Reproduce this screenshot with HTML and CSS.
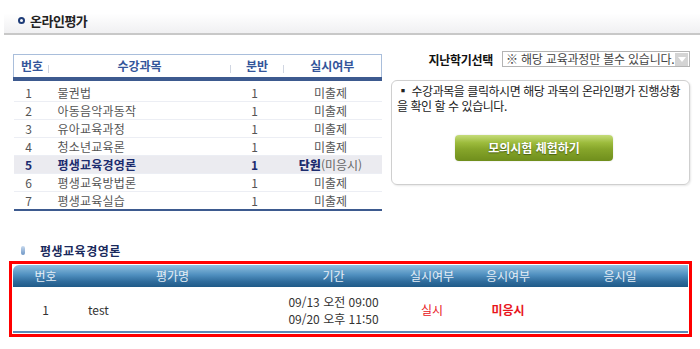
FILE: index.html
```html
<!DOCTYPE html>
<html lang="ko">
<head>
<meta charset="utf-8">
<link rel="stylesheet" href="styles.css">
</head>
<body>
<div class="page">
  <div class="titlebar">
    <span class="title-dot"></span>
    <h1 class="title">온라인평가</h1>
  </div>

  <div class="main">
    <div class="left">
      <table class="courses">
        <colgroup>
          <col class="c-no"><col class="c-name"><col class="c-sec"><col class="c-stat">
        </colgroup>
        <thead>
          <tr>
            <th><span class="sep">번호</span></th>
            <th><span class="sep">수강과목</span></th>
            <th><span class="sep">분반</span></th>
            <th>실시여부</th>
          </tr>
        </thead>
        <tbody>
          <tr><td class="num">1</td><td class="name">물권법</td><td class="num">1</td><td class="stat">미출제</td></tr>
          <tr><td class="num">2</td><td class="name">아동음악과동작</td><td class="num">1</td><td class="stat">미출제</td></tr>
          <tr><td class="num">3</td><td class="name">유아교육과정</td><td class="num">1</td><td class="stat">미출제</td></tr>
          <tr><td class="num">4</td><td class="name">청소년교육론</td><td class="num">1</td><td class="stat">미출제</td></tr>
          <tr class="active"><td class="num">5</td><td class="name">평생교육경영론</td><td class="num">1</td><td class="stat"><b>단원</b><span class="muted">(미응시)</span></td></tr>
          <tr><td class="num">6</td><td class="name">평생교육방법론</td><td class="num">1</td><td class="stat">미출제</td></tr>
          <tr><td class="num">7</td><td class="name">평생교육실습</td><td class="num">1</td><td class="stat">미출제</td></tr>
        </tbody>
      </table>
    </div>

    <div class="right">
      <div class="semester">
        <span class="semester-label">지난학기선택</span>
        <div class="select">
          <span class="select-text">※ 해당 교육과정만 볼수 있습니다.</span>
          <span class="select-arrow">
            <svg width="8" height="5" viewBox="0 0 8 5"><path d="M0 0h8L4 5z" fill="#fff"/></svg>
          </span>
        </div>
      </div>
      <div class="info">
        <p class="info-text">▪ 수강과목을 클릭하시면 해당 과목의 온라인평가 진행상황을 확인 할 수 있습니다.</p>
        <div class="btn-wrap">
          <a class="btn">모의시험 체험하기</a>
        </div>
      </div>
    </div>
  </div>

  <div class="sub-head">
    <span class="pill"></span>
    <h2 class="sub-title">평생교육경영론</h2>
  </div>

  <div class="redbox">
    <table class="exams">
      <colgroup>
        <col class="e-no"><col class="e-name"><col class="e-period"><col class="e-done"><col class="e-took"><col class="e-date">
      </colgroup>
      <thead>
        <tr>
          <th class="first">번호</th>
          <th>평가명</th>
          <th>기간</th>
          <th>실시여부</th>
          <th>응시여부</th>
          <th class="last">응시일</th>
        </tr>
      </thead>
      <tbody>
        <tr>
          <td class="center">1</td>
          <td class="ename">test</td>
          <td class="center period">09/13 오전 09:00<br>09/20 오후 11:50</td>
          <td class="center red">실시</td>
          <td class="center red bold">미응시</td>
          <td></td>
        </tr>
      </tbody>
    </table>
  </div>
</div>
</body>
</html>
```
FILE: styles.css
```css
* { box-sizing: border-box; }
html, body { margin: 0; padding: 0; background: #fff; }
body {
  font-family: "Noto Sans CJK KR", "Noto Sans", sans-serif;
  font-size: 12px;
  color: #444;
  width: 700px;
  height: 349px;
  overflow: hidden;
}
.page { width: 700px; }

.titlebar {
  margin-left: 4px;
  height: 35px;
  display: flex;
  align-items: center;
  padding: 8px 0 0 14px;
  background: linear-gradient(to bottom, #ffffff 0%, #ffffff 40%, #f0f0f2 100%);
  border-bottom: 2px solid #c8c8c8;
}
.title-dot {
  width: 7px; height: 7px;
  border: 2px solid #1e3c78;
  border-radius: 50%;
  margin-right: 5px;
}
.title {
  margin: 0;
  font-size: 13px;
  font-weight: bold;
  color: #222;
  letter-spacing: -0.5px;
}

.main {
  display: flex;
  padding: 19px 0 0 13px;
}
.left { width: 368px; }
.courses {
  width: 368px;
  border-collapse: collapse;
  table-layout: fixed;
}
.c-no { width: 35px; }
.c-name { width: 182px; }
.c-sec { width: 53px; }
.c-stat { width: 98px; }
.courses thead tr {
  border: 1px solid #a9bedb;
  border-bottom: 4px solid #3d5a8f;
}
.courses th {
  height: 24px;
  padding: 0;
  font-size: 12px;
  font-weight: bold;
  color: #34559a;
  text-align: center;
  position: relative;
  line-height: 20px;
}
.courses th:first-child { text-align: left; padding-left: 7px; }
.courses th .sep { display: inline-block; }
.courses th:not(:last-child)::after {
  content: "";
  position: absolute;
  right: 0; top: 10px;
  width: 1px; height: 8px;
  background: #d0d6e2;
}
.courses td {
  height: 17.6px;
  padding: 0;
  line-height: 17px;
  color: #555;
  border-bottom: 1px solid #eceef4;
}
.courses tbody tr:first-child td { height: 20.6px; padding-top: 3px; }
.courses tbody tr:last-child td { border-bottom: 2px solid #3d5a8f; height: 19px; }
.courses td.num { text-align: center; padding-right: 5px; }
.courses td.name { padding-left: 9px; letter-spacing: 0.2px; }
.courses td.stat { text-align: center; padding-right: 4px; }
.courses tr.active td { background: #ebebf0; color: #1c2c6e; font-weight: bold; }
.courses tr.active td .muted { color: #666; font-weight: normal; }
.courses tr.active td b { color: #1c2c6e; }

.right {
  width: 299px;
  margin-left: 10px;
  margin-top: -3px;
}
.semester {
  display: flex;
  align-items: center;
  justify-content: flex-end;
  height: 16px;
}
.semester-label {
  font-weight: bold;
  color: #111;
  margin-right: 9px;
  letter-spacing: -0.3px;
}
.select {
  width: 188px;
  height: 16px;
  border: 1px solid #b4b4b4;
  display: flex;
  align-items: center;
  justify-content: space-between;
  padding-left: 3px;
}
.select-text { color: #444; font-size: 12px; line-height: 14px; white-space: nowrap; letter-spacing: -0.2px; }
.select-arrow {
  width: 13px; height: 13px;
  margin-right: 1px;
  background: #d4d4d4;
  display: flex; align-items: center; justify-content: center;
}
.info {
  margin-top: 13px;
  height: 105px;
  border: 1px solid #cfcfcf;
  border-radius: 6px;
  box-shadow: 1px 1px 2px #e8e8e8;
  padding: 2px 4px 0 5px;
}
.info-text {
  margin: 0;
  font-size: 12px;
  line-height: 15px;
  color: #222;
  letter-spacing: -0.45px;
}
.btn-wrap {
  display: flex;
  justify-content: center;
  margin-top: 22px;
  padding-right: 14px;
}
.btn {
  width: 158px;
  height: 26px;
  border-radius: 4px;
  background: linear-gradient(to bottom, #c5dc7a 0%, #9cbb3c 30%, #86a52a 55%, #6f8e1c 100%);
  box-shadow: 0 0 2px #ddd;
  color: #fff;
  font-weight: bold;
  font-size: 12px;
  line-height: 26px;
  text-align: center;
  text-shadow: 0 1px 1px #4a6010;
}

.sub-head {
  display: flex;
  align-items: center;
  padding-left: 21px;
  margin-top: 31px;
  height: 16px;
}
.pill {
  width: 4px; height: 9px;
  border-radius: 2px;
  background: linear-gradient(to bottom, #c7d9ee, #6f97c6);
  margin-right: 15px;
}
.sub-title {
  margin: 0;
  font-size: 12px;
  font-weight: bold;
  color: #1a2a5c;
  letter-spacing: 0.5px;
}

.redbox {
  margin: 3px 0 0 9px;
  width: 683px;
  height: 76px;
  border: 3px solid #f00;
  padding: 1px 1px 0 1px;
}
.exams {
  width: 675px;
  border-collapse: collapse;
  table-layout: fixed;
}
.e-no { width: 65px; }
.e-name { width: 189px; }
.e-period { width: 133px; }
.e-done { width: 64px; }
.e-took { width: 88px; }
.e-date { width: 136px; }
.exams thead tr { background: linear-gradient(to bottom, #8fc0e0 0%, #4f8fbf 45%, #2f6c9c 75%, #1f5a88 100%); }
.exams th {
  height: 22px;
  padding: 0;
  font-weight: normal;
  color: #e6eef6;
  font-size: 12px;
  line-height: 20px;
  text-align: center;
}
.exams th.first { border-top-left-radius: 6px; }
.exams td {
  padding: 0;
  height: 45px;
  color: #333;
  border-bottom: 2px solid #5b8bb8;
}
.exams td.center { text-align: center; }
.exams td.ename { padding-left: 10px; }
.exams td.period { line-height: 17px; padding-top: 2px; }
.exams td.red { color: #e8141c; }
.exams td.bold { font-weight: bold; }
```
